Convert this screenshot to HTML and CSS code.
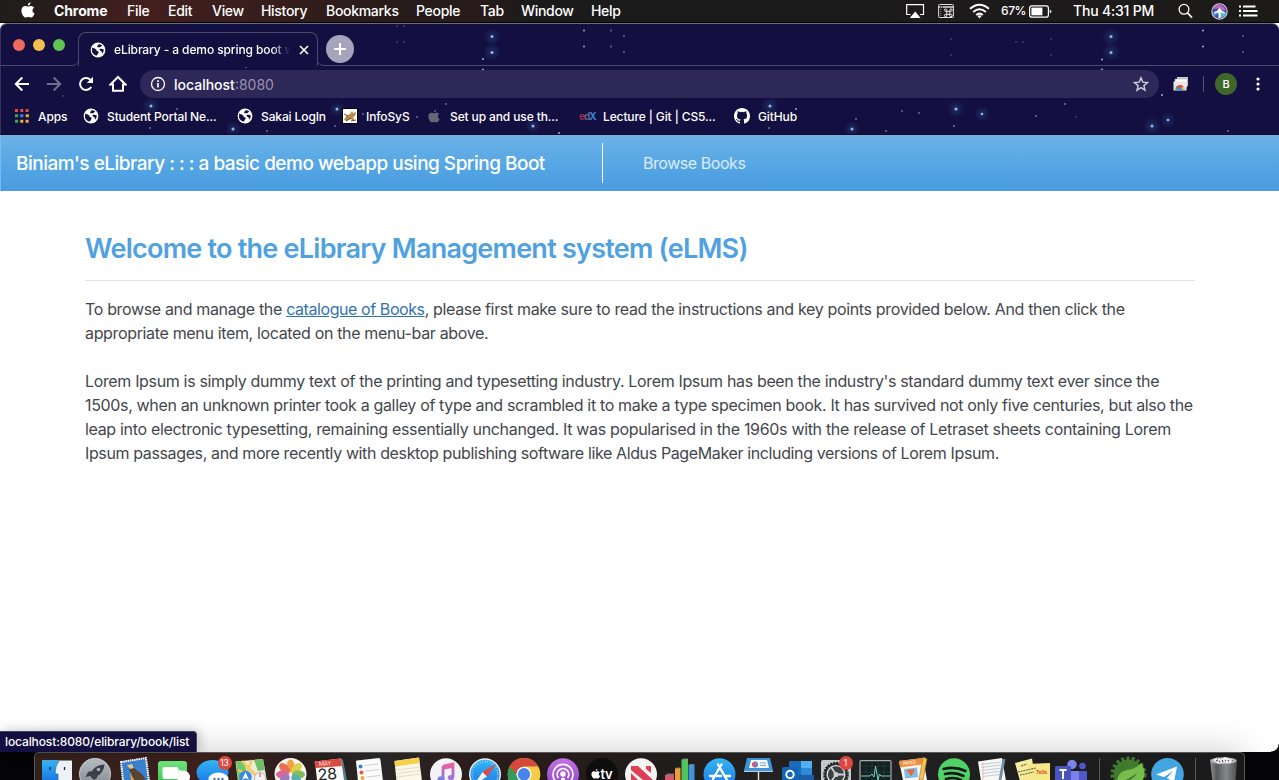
FILE: index.html
```
<!DOCTYPE html>
<html lang="en">
<head>
<meta charset="utf-8">
<title>eLibrary - a demo spring boot webapp</title>
<link rel="stylesheet" href="styles.css">
</head>
<body>
<svg class="defs" aria-hidden="true">
  <defs>
    <symbol id="globe" viewBox="0 0 16 16"><circle cx="8" cy="8" r="7.4" fill="#fff"/><path d="M2.2 5.6C3.6 6.6 4.6 6.2 5.8 7.2 7 8 6.2 8.8 7.6 9.2 9 9.4 9 10.2 8.2 11.2 7.6 12 7.4 13 6.6 13.6 5 13.4 2.4 11.6 2 9.4Z M8.6 2.2C9.8 2 11.4 2.6 12.2 3.6 11.2 4 11 5.4 9.6 5.2 8.6 5 8 5.4 7.2 5 7 4 8 3 8.6 2.2Z M9.6 7C10.8 6.2 12.6 7 13.8 7.6 13.8 9 13.2 10.6 12.4 11.4 11.6 10.6 12 9.6 11 9 10 8.8 9.2 8 9.6 7Z" fill="#130f40"/></symbol>
    <symbol id="apple" viewBox="0 0 14 16"><path d="M9.6.3C9.7 1.7 8.5 3.5 6.9 3.5 6.7 2 8 .5 9.6.3ZM10 4.1C11.400 4.100 12.500 4.900 13.100 5.700 10.700 7.200 11.100 10.400 13.600 11.400 12.900 13.200 11.500 15.500 10.100 15.500 9.100 15.500 8.600 14.900 7.400 14.900 6.200 14.900 5.600 15.500 4.700 15.500 2.900 15.500.4 12 .4 8.700.4 5.800 2.200 4.100 4.200 4.100 5.400 4.100 6.300 4.800 7.100 4.800 7.900 4.800 8.800 4.100 10 4.100Z" fill="currentColor"/></symbol>
    <linearGradient id="blue" x2="0" y2="1"><stop stop-color="#33b5f5"/><stop offset="1" stop-color="#1b74e4"/></linearGradient>
    <linearGradient id="silver" x2="0" y2="1"><stop stop-color="#b7bec4"/><stop offset="1" stop-color="#7d868d"/></linearGradient>
    <linearGradient id="green" x2="0" y2="1"><stop stop-color="#6fe57b"/><stop offset="1" stop-color="#35c44c"/></linearGradient>
    <linearGradient id="note" x2="0" y2="1"><stop stop-color="#f0609a"/><stop offset="1" stop-color="#7a7be8"/></linearGradient>
    <linearGradient id="purple" x2="0" y2="1"><stop stop-color="#c472e8"/><stop offset="1" stop-color="#8d3fc4"/></linearGradient>
    <linearGradient id="bin" x2="1" y2="0"><stop stop-color="#8f9395"/><stop offset=".25" stop-color="#55595b"/><stop offset=".6" stop-color="#85898b"/><stop offset="1" stop-color="#4b4e50"/></linearGradient>
    <radialGradient id="glow"><stop stop-color="#2c5c9c" stop-opacity=".4"/><stop offset="1" stop-color="#2c5c9c" stop-opacity="0"/></radialGradient>
  </defs>
</svg>

<header class="menubar">
  <svg class="mb-apple" width="14" height="16"><use href="#apple"/></svg>
  <b>Chrome</b><span>File</span><span>Edit</span><span>View</span><span>History</span><span>Bookmarks</span><span>People</span><span>Tab</span><span>Window</span><span>Help</span>
  <div class="tray">
    <svg width="19" height="16" viewBox="0 0 19 16" fill="none" stroke="#fff"><path d="M4.500 11.500H.7V1.700H17.500V11.500H14" stroke-width="1.200"/><path d="M9.200 8.500 14.600 15H3.800Z" fill="#fff" stroke="none"/></svg>
    <svg width="16" height="16" viewBox="0 0 16 16" fill="none" stroke="#ddd"><rect x=".6" y="1.500" width="14.800" height="13" rx=".8"/><path d="M.6 4H15.400" stroke-width="1.500" stroke-dasharray="1.500 .6 1.500 .6 12"/><path d="M2.800 6V13" stroke-dasharray="1 1" opacity=".6"/><path d="M8.800 8.300H11.800V11.300H8.800ZM8.800 8.300H7.900A1.200 1.200 0 1 1 8.800 7.300ZM11.800 8.300V7.300A1.200 1.200 0 1 1 12.700 8.300ZM8.800 11.300V12.200A1.200 1.200 0 1 1 7.900 11.300ZM11.800 11.300H12.700A1.200 1.200 0 1 1 11.800 12.200Z" stroke-width=".9" stroke="#fff"/></svg>
    <svg width="21" height="16" viewBox="0 0 21 16" fill="none" stroke="#fff" stroke-width="2"><path d="M1 5.800Q10.500-2.400 20 5.800M4.200 9Q10.500 3.600 16.800 9M7.200 12Q10.500 9.200 13.800 12"/><path d="M8.400 13 10.500 15.500 12.600 13Q10.500 11.600 8.400 13Z" fill="#fff" stroke="none"/></svg>
    <span class="pct">67%</span>
    <svg width="23" height="13" viewBox="0 0 23 13"><rect x=".6" y=".8" width="18.800" height="11.300" rx="2.200" fill="none" stroke="#fff" stroke-width="1.200"/><rect x="2.400" y="2.600" width="11" height="7.700" fill="#fff"/><path d="M20.700 4.500Q22.600 5 22.600 6.500 22.600 8 20.700 8.500Z" fill="#ccc"/></svg>
    <span class="clock">Thu 4:31 PM</span>
    <svg width="15" height="16" viewBox="0 0 15 16" fill="none" stroke="#fff" stroke-width="1.300"><circle cx="6" cy="6.300" r="4.900"/><path d="M9.600 10 14 14.600" stroke-width="1.700"/></svg>
    <svg width="17" height="17" viewBox="0 0 17 17"><circle cx="8.500" cy="8.500" r="7.700" fill="#3d4f96" stroke="#d5cde6" stroke-width="1.100"/><path d="M2 6Q5 1 9 2 14 3 14 8 9 8 8 5 5 6 2 6Z" fill="#c565bf"/><path d="M2 10Q4 7 8 8 7 12 3 13Z" fill="#4a9dde"/><path d="M9 8Q13 8 15 10 14 14 9 15Z" fill="#55bfd5"/><path d="M8.500 4.500Q10 8 14 9.500L13.500 10.800Q11 9.500 9.500 9.500V15H7.500V9.500Q6 9.500 3.500 10.800L3 9.500Q7 8 8.500 4.500Z" fill="#fff"/></svg>
    <svg width="19" height="12" viewBox="0 0 19 12" stroke="#fff" stroke-width="2"><path d="M0 1.500H2M0 6H2M0 10.500H2M4 1.500H16.500M4 6H18.500M4 10.500H18.500"/></svg>
  </div>
</header>

<section class="chrome">
  <svg class="stars" id="stars" width="1279" height="112" viewBox="0 23 1279 112">
    <g fill="url(#glow)"><circle cx="492" cy="37" r="9"/><circle cx="492" cy="52" r="9"/><circle cx="151" cy="106" r="9"/><circle cx="233" cy="129" r="8"/><circle cx="337" cy="109" r="8"/><circle cx="533" cy="126" r="8"/><circle cx="770" cy="106" r="9"/><circle cx="852" cy="129" r="8"/><circle cx="956" cy="109" r="9"/><circle cx="982" cy="114" r="8"/><circle cx="1111" cy="37" r="9"/><circle cx="1111" cy="52" r="9"/><circle cx="1152" cy="126" r="9"/><circle cx="1168" cy="120" r="8"/></g>
    <g fill="#9cb2dc"><circle cx="492" cy="36.500" r="1.500"/><circle cx="492" cy="52.500" r="1.500"/><circle cx="151" cy="106" r="1.500"/><circle cx="233" cy="129" r="1.500"/><circle cx="337" cy="109" r="1.500"/><circle cx="533" cy="126" r="1.500"/><circle cx="770" cy="106" r="1.500"/><circle cx="852" cy="129" r="1.500"/><circle cx="956" cy="109" r="1.600"/><circle cx="982" cy="114" r="1.300"/><circle cx="1111" cy="36.500" r="1.500"/><circle cx="1111" cy="52.500" r="1.500"/><circle cx="1152" cy="126" r="1.500"/><circle cx="1168" cy="120" r="1.300"/><circle cx="483" cy="59" r="1"/><circle cx="483" cy="69.500" r="1"/><circle cx="584" cy="30.500" r="1"/><circle cx="584" cy="46.500" r="1"/><circle cx="559" cy="133" r="1"/><circle cx="796" cy="109" r="1"/><circle cx="1102" cy="59.500" r="1"/><circle cx="1102" cy="69.500" r="1"/><circle cx="1203" cy="30.500" r="1"/><circle cx="1203" cy="46.500" r="1"/><circle cx="1162" cy="95" r="1"/></g>
    <g fill="#6670a5"><circle cx="611" cy="30.500" r=".9"/><circle cx="611" cy="46.500" r=".9"/><circle cx="624" cy="36" r=".9"/><circle cx="624" cy="52" r=".9"/><circle cx="446" cy="104" r="1"/><circle cx="335" cy="126" r="1"/><circle cx="267" cy="131" r="1"/><circle cx="150" cy="128" r="1"/><circle cx="177" cy="109" r="1"/><circle cx="363" cy="114" r="1"/><circle cx="417" cy="117" r="1"/><circle cx="246" cy="67.500" r=".8"/><circle cx="63" cy="96" r=".7"/><circle cx="397" cy="26" r=".7"/><circle cx="404" cy="26" r=".7"/><circle cx="397" cy="42" r=".7"/><circle cx="404" cy="42" r=".7"/><circle cx="769" cy="128" r="1"/><circle cx="856" cy="119" r="1"/><circle cx="886" cy="131" r="1"/><circle cx="902" cy="111" r="1"/><circle cx="919" cy="113" r="1"/><circle cx="954" cy="126" r="1.100"/><circle cx="1036" cy="116" r="1"/><circle cx="1065" cy="104" r="1"/><circle cx="1076" cy="117" r=".7"/><circle cx="1228" cy="131" r="1"/><circle cx="1243" cy="36" r=".9"/><circle cx="1243" cy="52" r=".9"/><circle cx="951" cy="39" r=".7"/><circle cx="951" cy="55" r=".7"/><circle cx="1016" cy="42" r=".7"/><circle cx="1023" cy="42" r=".7"/><circle cx="1051" cy="39" r=".7"/><circle cx="1051" cy="55" r=".7"/></g>
  </svg>
  <div class="tabstrip">
    <div class="lights"><i class="red"></i><i class="yellow"></i><i class="green"></i></div>
    <div class="tab">
      <svg width="16" height="16"><use href="#globe"/></svg>
      <span class="tab-title">eLibrary - a demo spring boot w</span>
      <svg class="tab-close" width="10" height="10" viewBox="0 0 10 10" stroke="#fff" stroke-width="1.600"><path d="M1 1 9 9M9 1 1 9"/></svg>
    </div>
    <div class="newtab-area"><div class="newtab"><svg width="14" height="14" viewBox="0 0 14 14" stroke="#fff" stroke-width="2"><path d="M7 1V13M1 7H13"/></svg></div></div>
  </div>
  <div class="toolbar">
    <svg width="16" height="16" viewBox="0 0 16 16" fill="none" stroke="#fff" stroke-width="2"><path d="M15 8H2M8.300 1.500 1.800 8 8.300 14.500"/></svg>
    <svg width="16" height="16" viewBox="0 0 16 16" fill="none" stroke="#716f8c" stroke-width="2"><path d="M1 8H14M7.700 1.500 14.200 8 7.700 14.500"/></svg>
    <svg width="16" height="16" viewBox="0 0 16 16" fill="none" stroke="#fff" stroke-width="2"><path d="M13.200 11A6 6 0 1 1 12.800 4.300"/><path d="M15 .8V7H8.800Z" fill="#fff" stroke="none"/></svg>
    <svg width="18" height="18" viewBox="0 0 18 18" fill="none" stroke="#fff" stroke-width="2"><path d="M1.500 9.500H4V15.800H14V9.500H16.500L9 2Z"/></svg>
    <div class="omnibox">
      <svg width="16" height="16" viewBox="0 0 16 16" fill="none" stroke="#fff"><circle cx="8" cy="8" r="6.500" stroke-width="1.300"/><path d="M8 7V11.600M8 4.300V6" stroke-width="1.700"/></svg>
      <span class="url">localhost<em>:8080</em></span>
      <svg width="16" height="16" viewBox="0 0 16 16" fill="none" stroke="#cfcdd9" stroke-width="1.400"><path d="M8 1.800 9.800 6.100 14.500 6.500 10.900 9.600 12 14.200 8 11.700 4 14.200 5.100 9.600 1.500 6.500 6.200 6.100Z"/></svg>
    </div>
    <svg class="ext" width="16" height="14" viewBox="0 0 16 14"><rect x="4" y="0" width="11" height="9" fill="#c9c9ce"/><rect x="2" y="2" width="12" height="8" fill="#fff" stroke="#aaa" stroke-width=".5"/><rect x=".5" y="4.500" width="13" height="9" fill="#e8e8ea"/><path d="M2.500 12.500A4.500 4.500 0 0 1 11.500 12.500Z" fill="#e14637"/><path d="M2.500 12.500A4.500 4.500 0 0 1 3.600 9.500L6 12.500Z" fill="#3aa757"/><path d="M11.500 12.500A4.500 4.500 0 0 0 10 9L8 12.500Z" fill="#f9c22d"/><circle cx="7" cy="12" r="2" fill="#4688f1"/></svg>
    <i class="divider"></i>
    <span class="avatar">B</span>
    <svg width="4" height="14" viewBox="0 0 4 14" fill="#fff"><circle cx="2" cy="2" r="1.600"/><circle cx="2" cy="7" r="1.600"/><circle cx="2" cy="12" r="1.600"/></svg>
  </div>
  <nav class="bookmarks">
    <a><svg width="14" height="14" viewBox="0 0 14 14"><path d="M0 1.500H14" stroke="#e14b3c" stroke-width="3" stroke-dasharray="3 2.300"/><path d="M0 6.800H3.200" stroke="#3fa45a" stroke-width="3"/><path d="M5.300 6.800H8.300" stroke="#3f83f0" stroke-width="3"/><path d="M10.600 6.800H14" stroke="#d8a53a" stroke-width="3"/><path d="M0 12.200H3.200" stroke="#3fa45a" stroke-width="3"/><path d="M5.300 12.200H14" stroke="#f0b32f" stroke-width="3" stroke-dasharray="3 2.300"/></svg>Apps</a>
    <a><svg width="16" height="16"><use href="#globe"/></svg>Student Portal Ne...</a>
    <a><svg width="16" height="16"><use href="#globe"/></svg>Sakai LogIn</a>
    <a><svg width="16" height="16" viewBox="0 0 16 16"><rect x=".5" y=".5" width="15" height="15" fill="#fff" stroke="#000"/><path d="M2 12 4 8 8 6 10 3 11 5 14 4 13 8 11 9 13 13 8 11 5 13Z" fill="#b98a4a"/><path d="M2 6 6 8M4 13 9 10M9 13 14 12" stroke="#51472f" stroke-width=".9"/></svg>InfoSyS</a>
    <a class="gray"><svg width="12" height="14" viewBox="0 0 14 16"><use href="#apple"/></svg><span>Set up and use th...</span></a>
    <a class="edx"><span class="edx-logo"><i>e</i><b>d</b><u>X</u></span>Lecture | Git | CS5...</a>
    <a><svg width="16" height="16" viewBox="0 0 16 16" fill="#fff"><path d="M8 0C3.580 0 0 3.580 0 8c0 3.540 2.290 6.530 5.470 7.590.4.070.55-.17.55-.38v-1.490c-2.010.37-2.530-.49-2.690-.94-.09-.23-.48-.94-.82-1.130-.28-.15-.68-.52-.01-.53.63-.01 1.080.58 1.230.82.72 1.210 1.870.87 2.330.66.07-.52.28-.87.51-1.070-1.780-.2-3.640-.89-3.640-3.950 0-.87.31-1.590.82-2.150-.08-.2-.36-1.020.08-2.120 0 0 .67-.21 2.200.82a7.600 7.600 0 0 1 4 0c1.530-1.040 2.200-.82 2.200-.82.44 1.100.16 1.920.08 2.120.51.56.82 1.270.82 2.150 0 3.070-1.870 3.750-3.650 3.950.29.25.54.73.54 1.480v2.200c0 .21.150.46.55.38A8 8 0 0 0 16 8c0-4.420-3.580-8-8-8Z"/></svg>GitHub</a>
  </nav>
</section>

<div class="navbar">
  <a class="brand">Biniam's eLibrary : : : a basic demo webapp using Spring Boot</a>
  <i class="nav-rule"></i>
  <a class="nav-link">Browse Books</a>
</div>

<main class="page">
  <h1>Welcome to the eLibrary Management system (eLMS)</h1>
  <p>To browse and manage the <a class="link">catalogue of Books</a>, please first make sure to read the instructions and key points provided below. And then click the<br>appropriate menu item, located on the menu-bar above.</p>
  <p>Lorem Ipsum is simply dummy text of the printing and typesetting industry. Lorem Ipsum has been the industry's standard dummy text ever since the<br>1500s, when an unknown printer took a galley of type and scrambled it to make a type specimen book. It has survived not only five centuries, but also the<br><span class="loose">leap into electronic typesetting, remaining essentially unchanged. It was popularised in the 1960s with the release of Letraset sheets containing Lorem</span><br><span class="tight">Ipsum passages, and more recently with desktop publishing software like Aldus PageMaker including versions of Lorem Ipsum.</span></p>
</main>

<footer class="desk">
  <div class="dock">
    <svg class="app" viewBox="0 0 39 28"><rect x="5" y="8.500" width="30" height="22" fill="#edf2f8"/><path d="M5 8.500H22Q18 14 18 22H21V30H5Z" fill="url(#blue)"/><path d="M22 8.500Q18 14 18 22H21V30" fill="none" stroke="#2a5e94" stroke-width=".7"/><path d="M13 15V18M27.500 15V18" stroke="#123" stroke-width="1.300"/></svg>
    <svg class="app" viewBox="0 0 39 28"><circle cx="19" cy="22" r="15.700" fill="url(#silver)" stroke="#d3d7da" stroke-width=".8"/><path d="M28.500 12.500Q20 12.500 16 19L12 20 9.500 25 14 24 18 28 21 26 21.500 24Q28 20 28.500 12.500Z" fill="#3a4047"/><circle cx="22.500" cy="17.500" r="1.800" fill="#a8b0b7"/></svg>
    <svg class="app" viewBox="0 0 39 28"><path d="M6 10 31 6 34 29H8Z" fill="#3a80d0" stroke="#fff" stroke-width="2" stroke-dasharray="1.600 .6"/><path d="M13 12 18 13 20 17 27 22 31 28H19L15 20Z" fill="#59452f"/><path d="M12 13 17 12 19 16 15 17Z" fill="#d9c9a5"/><path d="M15 20 19 28H16Z" fill="#e3a63a"/></svg>
    <svg class="app" viewBox="0 0 39 28"><rect x="4" y="9" width="29" height="25" rx="3" fill="url(#green)"/><rect x="8.500" y="15" width="16" height="12" rx="2" fill="#fff"/><circle cx="29.500" cy="25" r="6.500" fill="#fff"/><path d="M25 21Q23 16 28 19L28 25Z" fill="#fff"/></svg>
    <div class="badged"><svg class="app" viewBox="0 0 39 28"><ellipse cx="19.500" cy="20.500" rx="16" ry="12.500" fill="url(#blue)"/><ellipse cx="25.500" cy="27" rx="10" ry="6.500" fill="#fff"/><g fill="#4b6f9f"><circle cx="21.500" cy="27" r="1.200"/><circle cx="25.500" cy="27" r="1.200"/><circle cx="29.500" cy="27" r="1.200"/></g></svg><span class="badge">13</span></div>
    <svg class="app" viewBox="0 0 39 28"><path d="M3.500 9.500 31 7 35 29H6Z" fill="#eee9dc"/><path d="M4 9.500 12 9 17 29H6Z" fill="#73c767"/><path d="M22 8 31 7 33 18 26 19Z" fill="#70bd64"/><path d="M10 9 28 28M20 8 14 22 6 18" stroke="#f5cc52" stroke-width="2.500" fill="none"/><circle cx="13.500" cy="25" r="6.200" fill="#3487eb"/><path d="M13.500 20 17 28 13.500 26 10 28Z" fill="#fff"/><circle cx="28" cy="26" r="5.500" fill="#f3f3f3" stroke="#999" stroke-width=".6"/><path d="M28 21V25" stroke="#e23b35"/></svg>
    <svg class="app" viewBox="0 0 39 28"><circle cx="19.500" cy="22" r="16" fill="#f6f5f2"/><g opacity=".9"><ellipse cx="19.500" cy="14" rx="4" ry="6.500" fill="#f29a2f"/><ellipse cx="25.500" cy="16.500" rx="4" ry="6.500" transform="rotate(45 25.500 16.500)" fill="#d9cf35"/><ellipse cx="27.500" cy="22.500" rx="6.500" ry="4" fill="#75b84a"/><ellipse cx="25.500" cy="27.500" rx="4" ry="6" transform="rotate(-45 25.500 27.500)" fill="#46a7ae"/><ellipse cx="13.500" cy="16.500" rx="4" ry="6.500" transform="rotate(-45 13.500 16.500)" fill="#e8604a"/><ellipse cx="11.500" cy="22.500" rx="6.500" ry="4" fill="#d35a8f"/><ellipse cx="13.500" cy="27.500" rx="4" ry="6" transform="rotate(45 13.500 27.500)" fill="#9370b8"/></g></svg>
    <svg class="app" viewBox="0 0 39 28"><path d="M5 9.500 31 6.500 35 28H7Z" fill="#fafafa"/><path d="M4.300 9.500 30.500 6.500 32 14 5.500 16Z" fill="#d84a40"/><path d="M31 6.500 33 8 37 28H34Z" fill="#567f85"/><text x="9" y="14" font-size="6" fill="#ffdcd8" transform="rotate(-4 9 14)">MAY</text><text x="8" y="28.500" font-size="16" fill="#222" transform="rotate(-4 8 28)">28</text></svg>
    <svg class="app" viewBox="0 0 39 28"><path d="M7 9.500Q7 8.500 8 8.400L30 6Q31 6 31.500 8L34 29H9Z" fill="#fbfbfb"/><circle cx="11.500" cy="14.500" r="2" fill="#347cf6"/><circle cx="12.500" cy="20.500" r="2" fill="#e8573e"/><circle cx="13.500" cy="26" r="2" fill="#f2a13b"/><path d="M16 13.500 29 12M16.500 19 30 17.500M17.500 25 31 23.500" stroke="#bbb" stroke-width=".7"/></svg>
    <svg class="app" viewBox="0 0 39 28"><path d="M6.500 9 31 5.500 34 29H8.500Z" fill="#fbf8ea"/><path d="M6.500 9 31 5.500 31.700 11 7 14.500Z" fill="#f6d049"/><path d="M9 18 32 15M9 21.500 32 18.500M9 25 33 22" stroke="#d8d4c3" stroke-width=".7"/></svg>
    <svg class="app" viewBox="0 0 39 28"><circle cx="19" cy="22.300" r="16" fill="#f4f4f7"/><path d="M16 14 26 12V25M16 28V14M16 16.500 26 14.500" stroke="url(#note)" stroke-width="2.800" fill="none"/><ellipse cx="14" cy="27" rx="3.500" ry="2.800" fill="#7f7fe8"/><ellipse cx="24" cy="25.500" rx="3.200" ry="2.600" fill="#a673d8"/></svg>
    <svg class="app" viewBox="0 0 39 28"><circle cx="19" cy="22.300" r="16" fill="#e9ecef"/><circle cx="19" cy="22.300" r="14.500" fill="url(#blue)"/><circle cx="19" cy="22.300" r="12.800" fill="none" stroke="#cfe8fa" stroke-width="1.800" stroke-dasharray=".6 2"/><path d="M30 12 16.500 20 21 24.500Z" fill="#e8473c"/><path d="M16.500 20 21 24.500 8 33Z" fill="#f4f4f4"/></svg>
    <svg class="app" viewBox="0 0 39 28"><circle cx="19" cy="22.300" r="16.300" fill="#f8cb45"/><path d="M4.500 14.500A16.300 16.300 0 0 1 33.300 14.500H19L12 26Z" fill="#d44a3b"/><path d="M4.700 14.500A16.300 16.300 0 0 0 8 34L17 28Z" fill="#349a55"/><circle cx="19" cy="22.300" r="7.600" fill="#fff"/><circle cx="19" cy="22.300" r="6.200" fill="#4683ec"/></svg>
    <svg class="app" viewBox="0 0 39 28"><circle cx="19" cy="22.300" r="16" fill="url(#purple)"/><g fill="none" stroke="#fff" stroke-width="1.700"><path d="M12.500 30A10 10 0 1 1 25.500 30M14.500 26A5.800 5.800 0 1 1 23.500 26"/></g><circle cx="19" cy="22" r="2.700" fill="#fff"/><rect x="17" y="25.500" width="4" height="5" rx="2" fill="#fff"/></svg>
    <svg class="app white" viewBox="0 0 39 28"><circle cx="19" cy="22.300" r="16" fill="#0d0d0d"/><use href="#apple" x="8" y="16.500" width="9.500" height="10.500"/><text x="17.500" y="26.500" font-size="13" font-weight="600" fill="#fff">tv</text></svg>
    <svg class="app" viewBox="0 0 39 28"><circle cx="19" cy="22.300" r="16" fill="#f5f3f4"/><path d="M9 14H16L31 28H21L9 18ZM24 14H29V21L24 17ZM9 21 16 28H9Z" fill="#df3e55"/></svg>
    <svg class="app" viewBox="0 0 39 28"><g><rect x="4" y="23" width="9" height="7" fill="#d55768"/><rect x="14" y="16.500" width="5.500" height="13" fill="#f09b38"/><rect x="20.500" y="7.500" width="6.500" height="22" fill="#52c45a"/><rect x="27.500" y="13" width="6" height="16" fill="#3f94d9"/></g><path d="M4 23 7 21.500H13V23ZM14 16.500 16 15.500H19.500V17ZM20.500 7.500 22 6.500H27V8ZM27.500 13 29 12H33.500V13Z" fill="#fff" opacity=".4"/></svg>
    <svg class="app" viewBox="0 0 39 28"><circle cx="19.500" cy="22.300" r="16" fill="url(#blue)"/><path d="M18 12.500 27 28M21.500 12.500 13 27M10 24H21M25 24H30" stroke="#fff" stroke-width="2.400" fill="none" stroke-linecap="round"/></svg>
    <svg class="app" viewBox="0 0 39 28"><path d="M8 6H31L34 18.500H5Z" fill="#3c93d8"/><path d="M12 8H28L30 16H10Z" fill="#f7f7f7"/><circle cx="16" cy="12.500" r="3" fill="#dd5260"/><path d="M16 9.500A3 3 0 0 1 16 15.500Z" fill="#5a8edc"/><path d="M21 11H27M21 13.500H27" stroke="#7aa5cf"/><path d="M5 18.500H34V20H5Z" fill="#a5d1ee"/><path d="M19.500 20V28" stroke="#d7dadd" stroke-width="1.500"/></svg>
    <svg class="app" viewBox="0 0 39 28"><rect x="11" y="9" width="23" height="20" rx="1.500" fill="#1c6bbd"/><path d="M23 9H34V16H23Z" fill="#4fb1ee"/><path d="M23 16H34V23H23Z" fill="#2a8bd9"/><path d="M11 23H36V29H11Z" fill="#1c5da8"/><rect x="4" y="15" width="16" height="16" rx="1.500" fill="#1266b4"/><circle cx="12" cy="22.500" r="3.700" fill="none" stroke="#fff" stroke-width="2"/></svg>
    <div class="badged"><svg class="app" viewBox="0 0 39 28"><rect x="4" y="8" width="30" height="24" rx="2" fill="#c4c7c9"/><circle cx="19" cy="22.500" r="11.500" fill="#33373a" stroke="#1f2122" stroke-width="2.500" stroke-dasharray="2 1"/><circle cx="19" cy="22.500" r="8.800" fill="#3c4043" stroke="#ddd" stroke-width="1.300"/><path d="M19 22.500 14 15M19 22.500H28M19 22.500 14 30" stroke="#cfd2d3" stroke-width="1.800"/><circle cx="19" cy="22.500" r="2.500" fill="#ccc"/></svg><span class="badge one">1</span></div>
    <svg class="app" viewBox="0 0 39 28"><rect x="4" y="8.700" width="31" height="24" rx="1" fill="#132020" stroke="#a9acad" stroke-width="1.200"/><path d="M10 9V28M16 9V28M22 9V28M28 9V28M5 14H34M5 20H34" stroke="#254640" stroke-width=".6"/><path d="M5 24H14L16 22 18 25 19.500 14 22 28 23.500 22 25 24H34" stroke="#79cfba" fill="none"/></svg>
    <svg class="app" viewBox="0 0 39 28"><path d="M4 9 28 6 32 28H8Z" fill="#f8f6f2"/><path d="M4 9 28 6 29.500 12 5 15.500Z" fill="#ef8c36"/><text x="8" y="13.200" font-size="4.500" fill="#fff" transform="rotate(-7 8 13)">PAGES</text><path d="M9 17 22 15.500 23 25 10 26.500Z" fill="#7fbde8"/><path d="M11 18 20 17 16.500 24Z" fill="#e8682d"/><path d="M28 5 32 7 28 28 24 28Z" fill="#f3c352" stroke="#a9672b" stroke-width=".6"/></svg>
    <svg class="app" viewBox="0 0 39 28"><circle cx="20" cy="22.300" r="16" fill="#51d267"/><path d="M9.500 17Q21 14 31.500 19M11 22Q21 19.500 29.500 24M12 27Q20 24.500 27 28" stroke="#151a16" stroke-width="2.600" fill="none" stroke-linecap="round"/></svg>
    <svg class="app" viewBox="0 0 39 28"><path d="M5 9.500 29 6 33 29H8Z" fill="#f7f7f5"/><path d="M8 12.500 28 10M8 15.500 28 13M9 18.500 29 16M9 21.500 29 19M10 24.500 30 22" stroke="#a9b8c6" stroke-width=".7"/><path d="M10 10V28" stroke="#e5a4a0" stroke-width=".6"/><path d="M31 7 27 28" stroke="#708da5" stroke-width="2.800"/></svg>
    <svg class="app" viewBox="0 0 39 28"><path d="M3 11 20 6.500 23 26 8 29Z" fill="#f7eda0"/><path d="M15 12 38 11V28H8L18 24Z" fill="#f6e887"/><path d="M9 14 15 12M6 20 24 16M8 23 22 20" stroke="#6f6744" stroke-width="1.100" stroke-dasharray="2 .7"/><text x="24" y="21.500" font-size="5" font-weight="700" fill="#c74a31">7x0s</text></svg>
    <svg class="app" viewBox="0 0 39 28"><circle cx="21" cy="12.500" r="4.700" fill="#7b83eb"/><circle cx="31.500" cy="14" r="3.300" fill="#5059c9"/><path d="M27 19H36V29H27Z" fill="#5059c9"/><path d="M14 19H28V29H14Z" fill="#7b83eb"/><rect x="4" y="14" width="16" height="16" rx="1.200" fill="#4b53bc"/><path d="M8.500 18H15.500M12 18V27" stroke="#fff" stroke-width="2"/></svg>
    <i class="dock-rule"></i>
    <svg class="app" viewBox="0 0 39 28"><circle cx="19.500" cy="22.500" r="16" fill="none" stroke="#3f7a2e" stroke-width="4" stroke-dasharray="3 2.200"/><circle cx="19.500" cy="22.500" r="15" fill="#3f7a2e"/><path d="M8 30Q8 20 18 18 27 17 32 11 39 22 32 30H16Q25 27 28 21 20 27 12 30Z" fill="#77bd49"/></svg>
    <svg class="app" viewBox="0 0 39 28"><circle cx="19.500" cy="22.300" r="16.300" fill="#43a5df"/><path d="M8 22.500 29 14.500 26 30 19 26 25 19 16 25Z" fill="#fff"/></svg>
    <i class="dock-rule last"></i>
    <svg class="app" viewBox="0 0 39 28"><path d="M6 7.500H33L31.500 30H8.500Z" fill="url(#bin)"/><ellipse cx="19.500" cy="8.800" rx="13" ry="3.500" fill="#aeb2b5"/><path d="M9 8 13 5.500 17 7 21 5 26 7 30 8 26 11 20 10.500 14 11.500Z" fill="#f2f2f2"/><path d="M12 9 14 8M18 8 19 10M24 8 25 9.500M15 10 16 9M28 8 28.500 9" stroke="#48516f" stroke-width="1.200"/><path d="M21 9 22 8M13 7 14 6.500" stroke="#c84545" stroke-width="1.200"/></svg>
  </div>
  <div class="status">localhost:8080/elibrary/book/list</div>
</footer>
</body>
</html>
```
FILE: styles.css
```
* { box-sizing: border-box; }
body { margin: 0; width: 1279px; height: 780px; overflow: hidden; display: flex; flex-direction: column; background: #fff; font-family: Inter, "Liberation Sans", sans-serif; white-space: nowrap; }
svg { display: block; flex: none; }
i, em, u { font-style: normal; text-decoration: none; }
.defs { position: absolute; width: 0; height: 0; }

.menubar { height: 23px; flex: none; display: grid; grid-template-columns: 33px 73px 41px 44px 49px 65px 90px 64px 41px 70px 60px 1fr; align-items: center; padding-left: 21px; background: linear-gradient(90deg, #1f1d1c 0, #261d1b 50px, #43201e 130px, #3a1e1c 230px, #261b1a 400px, #281a1b 480px, #1b1b1b 540px, #1d1a1a 100%); border-bottom: 1px solid #000; color: #fff; font-size: 14px; line-height: 22px; letter-spacing: -.3px; font-weight: 500; }
.menubar b { font-weight: 700; letter-spacing: -.1px; }
.mb-apple { margin-top: -2px; }
.tray { display: flex; align-items: center; padding-left: 255px; }
.tray svg:nth-child(2) { margin-left: 13px; }
.tray svg:nth-child(3) { margin-left: 15px; }
.pct { font-size: 12px; width: 28px; margin-left: 11px; letter-spacing: -.4px; }
.clock { width: 82px; margin: 0 23px 0 21px; letter-spacing: -.2px; }
.tray svg:nth-child(8) { margin-left: 18px; }
.tray svg:nth-child(9) { margin-left: 11px; }

.chrome { position: relative; height: 112px; flex: none; background: #130f40; border-top: 1px solid #6d6b80; border-left: 1px solid #37345c; border-bottom: 1px solid #090720; border-radius: 7px 7px 0 0; overflow: hidden; color: #fff; font-size: 12px; }
.stars { position: absolute; left: -1px; top: -1px; }
.tabstrip, .toolbar, .bookmarks { position: relative; display: flex; align-items: center; }
.tabstrip { height: 42px; align-items: flex-end; }
.lights { width: 78px; height: 42px; display: flex; gap: 8px; padding: 15px 0 0 12px; border-bottom: 1px solid #4b486f; border-bottom-right-radius: 7px; }
.lights i { width: 12px; height: 12px; border-radius: 50%; }
.red { background: #ed6a5e; }
.yellow { background: #f5bf4f; }
.green { background: #61c554; }
.tab { width: 240px; height: 34px; margin-left: -1px; border: 1px solid #4b486f; border-bottom: 0; border-radius: 8px 8px 0 0; display: flex; align-items: center; padding: 0 10px 0 11px; }
.tab-title { width: 176px; margin-left: 8px; letter-spacing: -.1px; font-weight: 500; mask-image: linear-gradient(90deg, #000 158px, transparent 176px); }
.tab-close { margin-left: 9px; }
.newtab-area { flex: 1; height: 42px; margin-left: -1px; border-bottom: 1px solid #4b486f; border-bottom-left-radius: 7px; padding: 11px 0 0 9px; }
.newtab { width: 28px; height: 28px; border-radius: 50%; background: #a6a4bb; display: grid; place-items: center; }
.toolbar { height: 36px; padding: 0 18px 0 13px; }
.toolbar > svg:nth-child(2), .toolbar > svg:nth-child(3) { margin-left: 16px; }
.toolbar > svg:nth-child(4) { margin-left: 15px; }
.omnibox { width: 1019px; height: 28px; border-radius: 14px; margin-left: 13px; background: #2e2858; display: flex; align-items: center; padding: 0 10px; }
.url { flex: 1; margin-left: 8px; font-size: 14px; font-weight: 500; }
.url em { color: #9794ae; font-weight: 400; }
.ext { margin-left: 14px; }
.divider { width: 1px; height: 16px; background: #55527a; margin-left: 14px; }
.avatar { width: 22px; height: 22px; border-radius: 50%; background: #40672b; margin: 0 19px 0 11px; text-align: center; line-height: 22px; font-size: 11px; font-weight: 500; }
.bookmarks { height: 28px; padding-left: 14px; letter-spacing: -.12px; font-weight: 500; display: grid; grid-template-columns: 68px 154px 105px 86px 151px 155px 80px; }
.bookmarks a { display: flex; align-items: center; gap: 8px; }
.bookmarks a:first-child { gap: 9px; }
.gray svg { color: #676578; }
.gray span { margin-left: 2px; }
.edx-logo { width: 16px; font-size: 10px; letter-spacing: -1px; }
.edx-logo i { color: #a5264f; font-weight: 700; }
.edx-logo b { color: #66647d; }
.edx-logo u { color: #2c87d8; font-weight: 700; }

.navbar { height: 56px; flex: none; display: flex; align-items: center; padding-left: 15px; background: linear-gradient(#6cb1e7, #57a7e4 50%, #489bdf); border-left: 1px solid #7db9e9; }
.brand { width: 586px; font-size: 19px; color: #fff; letter-spacing: -.51px; font-weight: 500; }
.nav-rule { width: 1px; height: 40px; background: #fff; }
.nav-link { margin-left: 40px; font-size: 16px; color: #dcecf9; letter-spacing: -.45px; }

.page { flex: 1; padding: 41px 84px 0 85px; color: #43474c; font-size: 16px; line-height: 24px; }
.page h1 { margin: 0 0 16px; height: 49px; border-bottom: 1px solid #dfe1e3; font-size: 27px; line-height: 34px; font-weight: 600; color: #4fa1e0; letter-spacing: -.75px; }
.page p { margin: 0 0 24px; letter-spacing: -.345px; }
.loose { letter-spacing: -.323px; }
.tight { letter-spacing: -.375px; }
.link { color: #3273ae; text-decoration: underline; letter-spacing: -.42px; }

.desk { position: relative; height: 28px; flex: none; background: #050507; }
.desk::before { content: ""; position: absolute; right: 0; top: -8px; width: 8px; height: 8px; background: radial-gradient(circle at 0 0, transparent 7px, #000 8px); }
.dock { position: relative; width: 1211px; height: 28px; margin-left: 34px; padding-left: 2.500px; display: flex; background: linear-gradient(90deg, #32201c, #3c201c 170px, #261e1c 290px, #272727 340px, #2b1c1b 440px, #211b1b 600px, #222 800px, #1a1a1b); border: solid #5b5858; border-width: 1px 1px 0; border-radius: 5px 5px 0 0; box-shadow: 0 0 34px rgba(0, 0, 0, .22); }
.app { width: 39px; height: 28px; margin-top: -1px; overflow: hidden; }
.app:first-child { margin-left: -1px; }
.badged .app:first-child { margin-left: 0; }
.app text { font-family: Inter, sans-serif; letter-spacing: -.3px; }
.white { color: #fff; }
.badged { position: relative; width: 39px; }
.badge { position: absolute; left: 25px; top: 3px; width: 14px; height: 14px; border-radius: 50%; background: #dc4840; color: #fff; font-size: 8.500px; line-height: 14px; text-align: center; }
.badge.one { left: 22px; }
.dock-rule { width: 1px; margin: 5px 9px 0; background: #58585a; }
.dock-rule.last { margin: 5px 8px 0; }
.status { position: absolute; left: 0; top: -21px; width: 197px; height: 21px; padding-left: 5px; background: #130f40; border: solid #47455e; border-width: 1px 1px 0 0; border-radius: 0 4px 0 0; box-shadow: 2px 0 12px rgba(0, 0, 0, .25); color: #fff; font-size: 12px; line-height: 20px; font-weight: 500; letter-spacing: -.11px; }
```
